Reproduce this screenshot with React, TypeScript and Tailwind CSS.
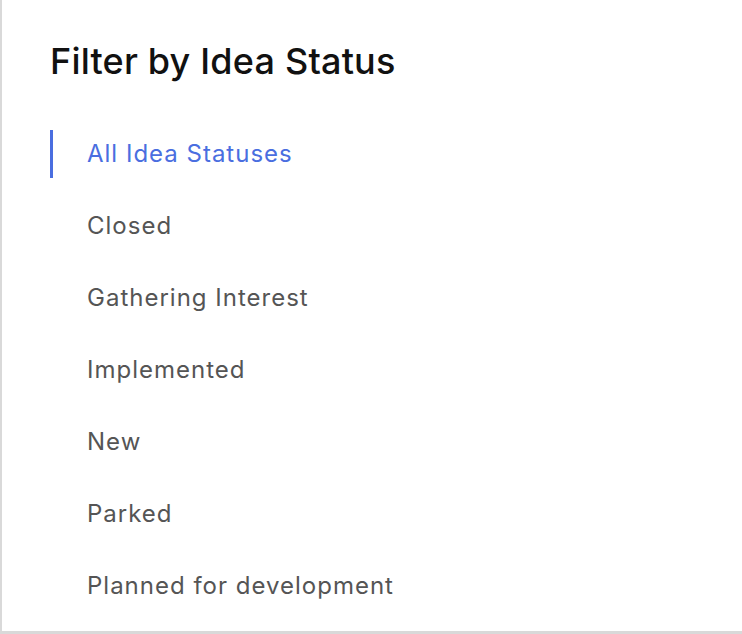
const statuses = [
  "All Idea Statuses",
  "Closed",
  "Gathering Interest",
  "Implemented",
  "New",
  "Parked",
  "Planned for development",
];

export default function App() {
  const active = 0;

  return (
    <div className="h-[634px] w-[742px] bg-white font-['Inter','Liberation_Sans',sans-serif]">
      <div className="flex h-full flex-col border-l-2 border-b-[3px] border-[#d9d9d9] pl-12 pt-9">
        <h2 className="h-[50px] text-[36px] leading-[50px] font-medium tracking-[0.2px] text-[#111111]">
          Filter by Idea Status
        </h2>
        <ul className="mt-[44px] flex flex-col gap-6">
          {statuses.map((s, i) => (
            <li
              key={s}
              className={
                i === active
                  ? "flex h-12 items-center border-l-[3px] border-[#4a6ee0] pl-[34px] text-[24px] tracking-[1px] text-[#4a6ee0]"
                  : "flex h-12 items-center border-l-[3px] border-transparent pl-[34px] text-[24px] tracking-[1px] text-[#555555]"
              }
            >
              {s}
            </li>
          ))}
        </ul>
      </div>
    </div>
  );
}
